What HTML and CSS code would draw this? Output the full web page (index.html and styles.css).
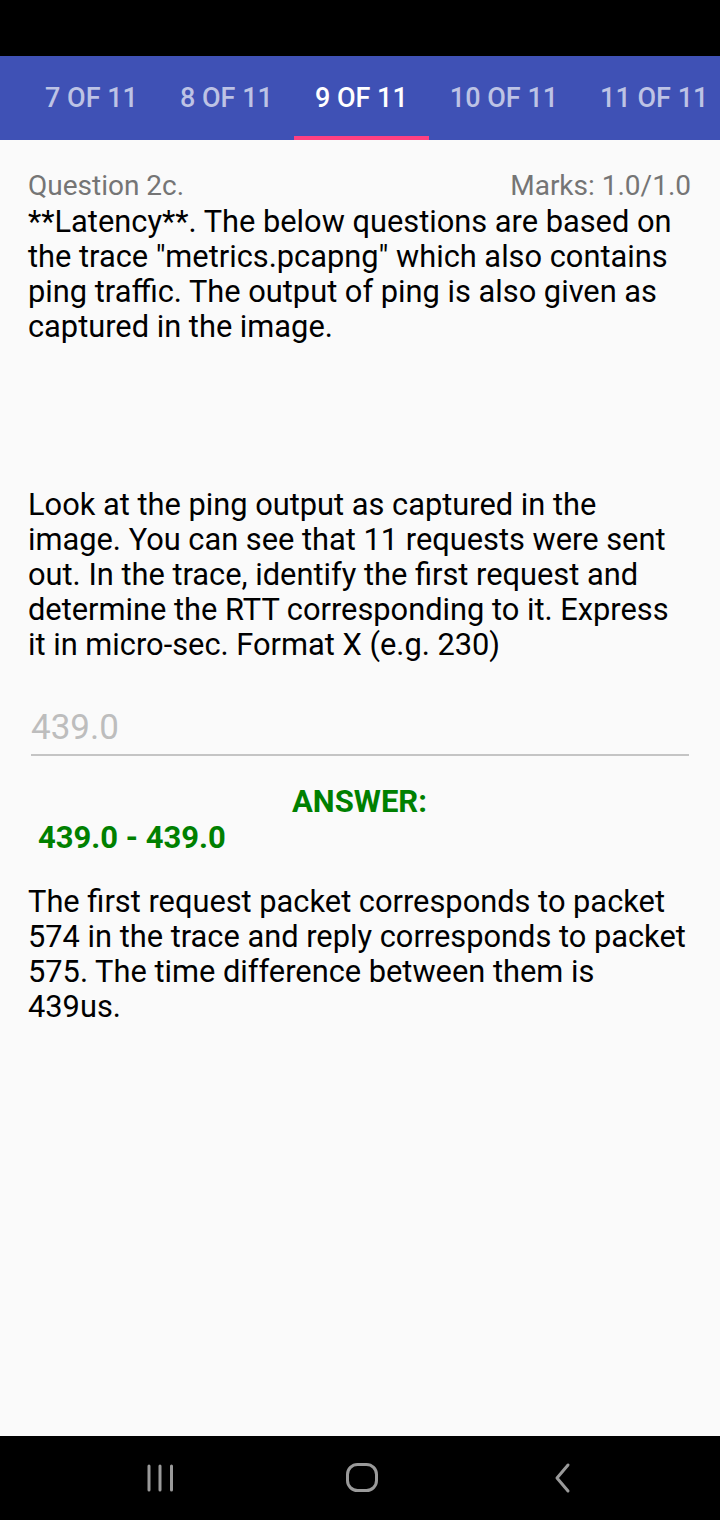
FILE: index.html
```html
<!DOCTYPE html>
<html lang="en">
<head>
<meta charset="utf-8">
<title>Question 9 of 11</title>
<link rel="stylesheet" href="styles.css">
</head>
<body>
<div class="screen">
  <div class="status-bar"></div>
  <nav class="tabs">
    <div class="tab-strip">
      <div class="tab">7 OF 11</div>
      <div class="tab">8 OF 11</div>
      <div class="tab active">9 OF 11</div>
      <div class="tab">10 OF 11</div>
      <div class="tab">11 OF 11</div>
    </div>
  </nav>
  <main class="content">
    <div class="q-head">
      <span class="q-title">Question 2c.</span>
      <span class="q-marks">Marks: 1.0/1.0</span>
    </div>
    <p class="text intro">**Latency**. The below questions are based on the trace "metrics.pcapng" which also contains ping traffic. The output of ping is also given as captured in the image.</p>
    <p class="text question">Look at the ping output as captured in the image. You can see that 11 requests were sent out. In the trace, identify the first request and determine the RTT corresponding to it. Express it in micro-sec. Format X (e.g. 230)</p>
    <div class="answer-input">439.0</div>
    <div class="answer-label">ANSWER:</div>
    <div class="answer-range">439.0 - 439.0</div>
    <p class="text explanation">The first request packet corresponds to packet 574 in the trace and reply corresponds to packet 575. The time difference between them is 439us.</p>
  </main>
  <footer class="nav-bar">
    <div class="nav-slot">
      <svg width="30" height="30" viewBox="0 0 30 30">
        <rect x="1.5" y="1.5" width="3" height="27" rx="1.5" fill="#9a9a9a"/>
        <rect x="12.5" y="1.5" width="3" height="27" rx="1.5" fill="#9a9a9a"/>
        <rect x="24" y="1.5" width="3" height="27" rx="1.5" fill="#9a9a9a"/>
      </svg>
    </div>
    <div class="nav-slot">
      <svg width="34" height="32" viewBox="0 0 34 32">
        <rect x="2.5" y="2.5" width="29" height="26" rx="10" fill="none" stroke="#9a9a9a" stroke-width="3"/>
      </svg>
    </div>
    <div class="nav-slot">
      <svg width="24" height="32" viewBox="0 0 24 32">
        <path d="M17 3 L6 16 L17 29" fill="none" stroke="#9a9a9a" stroke-width="3" stroke-linecap="round" stroke-linejoin="round"/>
      </svg>
    </div>
  </footer>
</div>
</body>
</html>
```

FILE: styles.css
```css
* { box-sizing: border-box; }
html, body {
  margin: 0;
  padding: 0;
}
body {
  width: 720px;
  height: 1520px;
  background: #fafafa;
  font-family: Roboto, "Liberation Sans", sans-serif;
  overflow: hidden;
}
.screen {
  display: flex;
  flex-direction: column;
  height: 1520px;
}
.status-bar {
  height: 56px;
  background: #000;
  flex: none;
}
.tabs {
  height: 84px;
  background: #3f51b5;
  flex: none;
  overflow: hidden;
}
.tab-strip {
  display: flex;
  height: 100%;
  padding-left: 24px;
}
.tab {
  flex: none;
  padding: 4px 21px 0;
  display: flex;
  align-items: center;
  font-size: 27px;
  font-weight: 500;
  color: rgba(255, 255, 255, 0.66);
  white-space: nowrap;
  border-bottom: 4px solid transparent;
}
.tab.active {
  color: #fff;
  border-bottom-color: #ff4081;
}
.content {
  flex: 1;
  padding: 28px 29px 0 28px;
}
.q-head {
  display: flex;
  justify-content: space-between;
  align-items: baseline;
  font-size: 28px;
  color: #757575;
  line-height: 36px;
}
.text {
  margin: 0;
  font-size: 30.8px;
  line-height: 35px;
  color: #000;
}
.question {
  margin-top: 143px;
}
.answer-input {
  margin: 44px 2px 0 3px;
  font-size: 35px;
  color: #bdbdbd;
  line-height: 44px;
  padding-bottom: 4px;
  border-bottom: 2px solid #c4c4c4;
}
.answer-label {
  margin-top: 28px;
  text-align: center;
  font-size: 31px;
  font-weight: 700;
  color: #008000;
  line-height: 36px;
}
.answer-range {
  margin-left: 10px;
  font-size: 31px;
  font-weight: 700;
  color: #008000;
  line-height: 36px;
}
.explanation {
  margin-top: 28px;
}
.nav-bar {
  height: 84px;
  flex: none;
  background: #000;
  display: flex;
  align-items: center;
  justify-content: center;
  padding-left: 4px;
}
.nav-slot {
  width: 201px;
  display: flex;
  justify-content: center;
  align-items: center;
}
.nav-slot svg {
  display: block;
}
```
